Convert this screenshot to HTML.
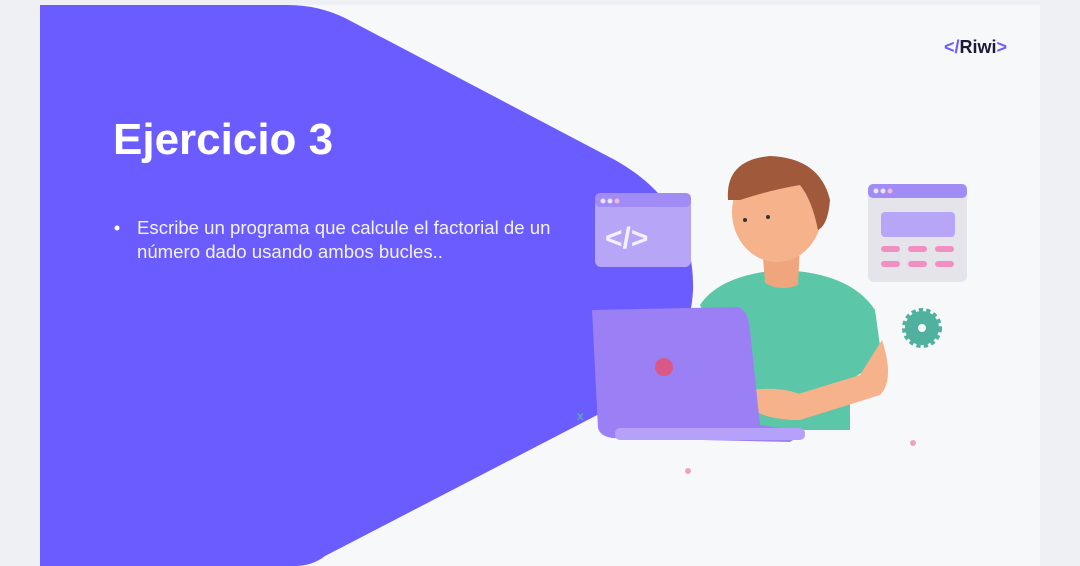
<!DOCTYPE html>
<html><head><meta charset="utf-8"><style>
html,body{margin:0;padding:0;width:1080px;height:566px;overflow:hidden;background:#eef0f4;font-family:"Liberation Sans",sans-serif}
</style></head><body>
<svg width="1080" height="566" viewBox="0 0 1080 566" style="position:absolute;left:0;top:0">
<rect x="40" y="5" width="1000" height="561" fill="#f7f8fa"/>
<path d="M40,5 L288,5 Q318,5 345,18 L615,160 Q695,205 693,290 Q690,355 630,398 L325,556 Q312,566 295,566 L40,566 Z" fill="#6a5cff"/>
<text x="113" y="154" font-family="Liberation Sans,sans-serif" font-weight="bold" font-size="44" fill="#fff">Ejercicio 3</text>
<circle cx="117" cy="228" r="2.5" fill="#fff"/>
<text x="137" y="234" font-size="18.6" fill="#f4f2ff">Escribe un programa que calcule el factorial de un</text>
<text x="137" y="258" font-size="18.6" fill="#f4f2ff">número dado usando ambos bucles..</text>
<text x="944" y="53" font-size="18" font-weight="bold" fill="#6a5cff">&lt;/<tspan fill="#1e1b3a">Riwi</tspan>&gt;</text>
<rect x="595" y="193" width="96" height="74" rx="6" fill="#b7a6f7"/>
<rect x="595" y="193" width="96" height="14" rx="5" fill="#a08cf4"/>
<circle cx="603" cy="201" r="2.5" fill="#e8e4ff"/><circle cx="610" cy="201" r="2.5" fill="#e8e4ff"/><circle cx="617" cy="201" r="2.5" fill="#f6b6d8"/>
<text x="605" y="248" font-size="30" font-weight="bold" fill="#f3f0ff">&lt;/&gt;</text>
<rect x="868" y="184" width="99" height="98" rx="6" fill="#e4e4ea"/>
<rect x="868" y="184" width="99" height="14" rx="5" fill="#a08cf4"/>
<circle cx="876" cy="191" r="2.5" fill="#e8e4ff"/><circle cx="883" cy="191" r="2.5" fill="#e8e4ff"/><circle cx="890" cy="191" r="2.5" fill="#f6b6d8"/>
<rect x="881" y="212" width="74" height="25" rx="4" fill="#b7a6f7"/>
<g fill="#f190c0"><rect x="881" y="246" width="19" height="6" rx="3"/><rect x="908" y="246" width="19" height="6" rx="3"/><rect x="935" y="246" width="19" height="6" rx="3"/><rect x="881" y="261" width="19" height="6" rx="3"/><rect x="908" y="261" width="19" height="6" rx="3"/><rect x="935" y="261" width="19" height="6" rx="3"/></g>
<circle cx="922" cy="328" r="17" fill="#4fb19e" stroke="#4fb19e" stroke-width="6" stroke-dasharray="4 3"/>
<circle cx="922" cy="328" r="4" fill="#f7f8fa"/>
<path d="M700,305 Q720,275 780,270 Q850,272 875,310 L882,360 L850,380 L850,430 L760,430 Z" fill="#5bc6a8"/>
<path d="M762,245 L800,245 L798,285 Q780,292 765,283 Z" fill="#f0a67c"/>
<ellipse cx="777" cy="212" rx="45" ry="50" fill="#f6b28a"/>
<path d="M728,200 Q725,160 770,156 Q820,158 830,200 Q828,225 818,230 Q812,200 800,185 Q770,190 740,200 Z" fill="#a0593a"/>
<circle cx="745" cy="220" r="2" fill="#333"/><circle cx="768" cy="217" r="2" fill="#333"/>
<path d="M882,340 Q895,380 880,395 L800,420 L795,395 L860,375 Z" fill="#f6b28a"/>
<path d="M750,390 Q790,385 810,400 L800,420 Q770,420 752,410 Z" fill="#f6b28a"/>
<path d="M592,310 L738,307 Q748,310 750,330 L760,425 L805,432 L790,442 L612,438 Q600,436 598,428 Z" fill="#9b7ff5"/>
<rect x="615" y="428" width="190" height="12" rx="5" fill="#b5a0fa"/>
<circle cx="664" cy="367" r="9" fill="#d95886"/>
<circle cx="913" cy="443" r="3" fill="#f0a3c0"/><circle cx="688" cy="471" r="3" fill="#f0a3c0"/>
<text x="577" y="420" font-size="12" font-weight="bold" fill="#4fb19e">x</text>
</svg>
</body></html>
